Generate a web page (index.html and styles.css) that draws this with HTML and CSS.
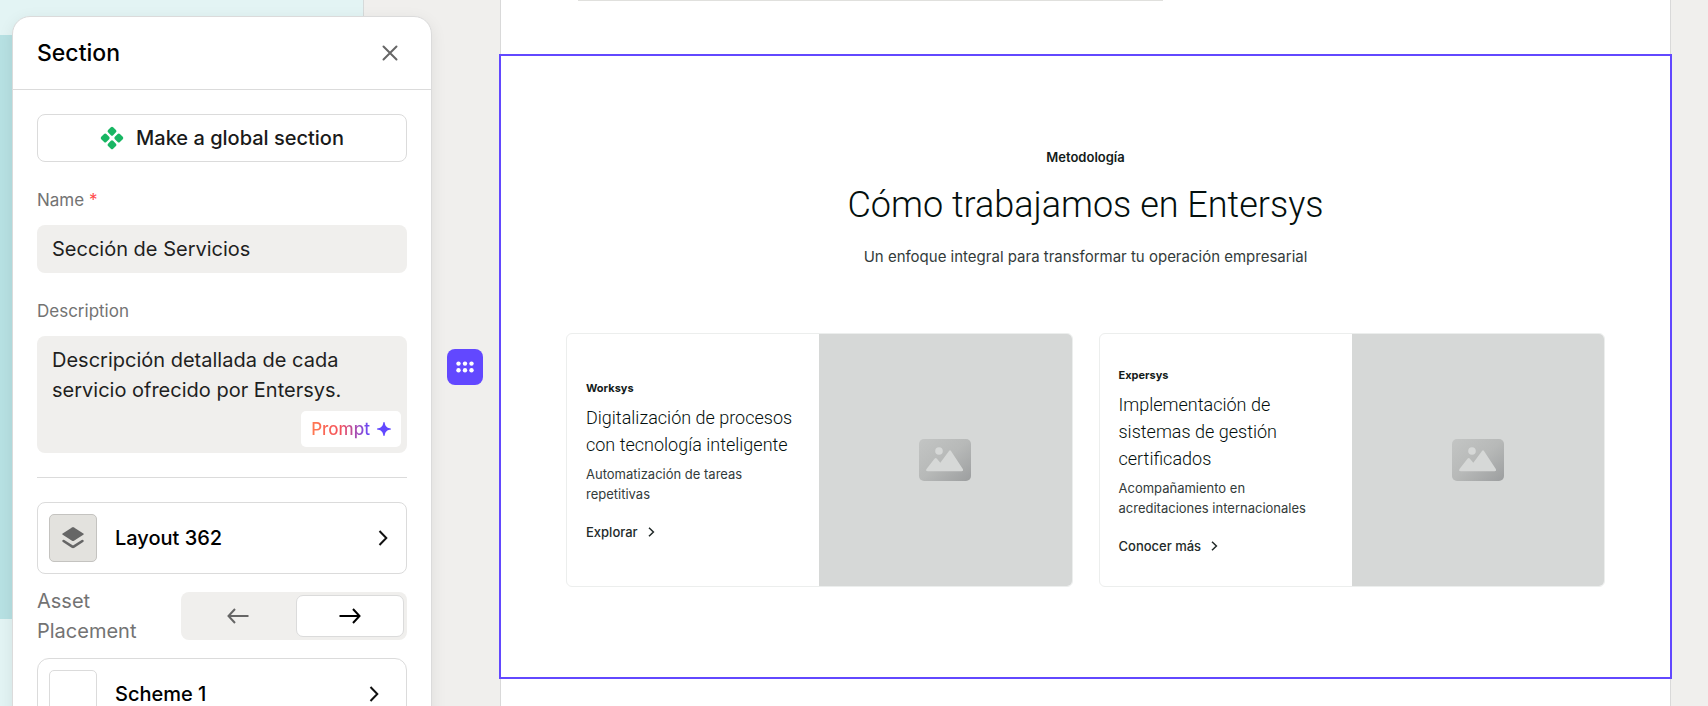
FILE: index.html
```html
<!DOCTYPE html>
<html lang="es">
<head>
<meta charset="utf-8">
<title>Section</title>
<link rel="stylesheet" href="styles.css">
</head>
<body>
<div class="app">
  <div class="preview" aria-hidden="true"><div class="preview-block"></div></div>

  <aside class="panel">
    <header class="panel-header">
      <h1 class="panel-title">Section</h1>
      <button class="close" type="button" aria-label="Close">
        <svg width="16" height="16" viewBox="0 0 16 16" fill="none" stroke="#666" stroke-width="2" stroke-linecap="round"><path d="M1.500 1.500l13 13M14.500 1.500l-13 13"/></svg>
      </button>
    </header>
    <form class="panel-body">
      <button class="global" type="button">
        <svg width="24" height="24" viewBox="0 0 24 24" fill="#18b663"><rect x="-3.6" y="-3.6" width="7.2" height="7.2" rx="1.6" transform="translate(12 5.2) rotate(45)"/><rect x="-3.6" y="-3.6" width="7.2" height="7.2" rx="1.6" transform="translate(18.8 12) rotate(45)"/><rect x="-3.6" y="-3.6" width="7.2" height="7.2" rx="1.6" transform="translate(12 18.8) rotate(45)"/><rect x="-3.6" y="-3.6" width="7.2" height="7.2" rx="1.6" transform="translate(5.2 12) rotate(45)"/></svg>
        <span>Make a global section</span>
      </button>
      <div class="field">
        <label class="label" for="name">Name <span class="required">*</span></label>
        <input class="control" id="name" type="text" value="Sección de Servicios">
      </div>
      <div class="field">
        <label class="label" for="description">Description</label>
        <div class="area">
          <textarea class="control control-area" id="description">Descripción detallada de cada servicio ofrecido por Entersys.</textarea>
          <button class="prompt" type="button">
            <span class="prompt-text">Prompt</span>
            <svg width="14" height="14" viewBox="0 0 14 14" fill="#6248ff"><path d="M7 0c.5 0 .6.400.8 1.200C8.300 4 9.600 5.700 12.800 6.200c.8.200 1.200.300 1.200.8s-.4.600-1.200.8C9.600 8.300 8.300 10 7.800 12.800c-.2.8-.3 1.200-.8 1.200s-.6-.4-.8-1.200C5.700 10 4.400 8.300 1.200 7.800.4 7.600 0 7.500 0 7s.4-.6 1.200-.8C4.400 5.700 5.700 4 6.200 1.200 6.400.4 6.500 0 7 0z"/></svg>
          </button>
        </div>
      </div>
      <hr class="divider">
      <button class="option" type="button">
        <span class="tile tile-layout">
          <svg width="22" height="22" viewBox="0 0 22 22"><path d="M10 .4q1-.6 2 0l9.300 6q1 .7 0 1.400l-9.300 6q-1 .6-2 0l-9.300-6q-1-.7 0-1.400z" fill="#666"/><path d="M1.600 14l8.700 5.700q.7.400 1.400 0l8.700-5.700" fill="none" stroke="#666" stroke-width="2.600" stroke-linecap="round" stroke-linejoin="round"/></svg>
        </span>
        <span class="option-name">Layout 362</span>
        <svg width="10" height="16" viewBox="0 0 10 16" fill="none" stroke="#111" stroke-width="2"><path d="M1.500 1l6.800 7-6.800 7"/></svg>
      </button>
      <div class="placement">
        <span class="placement-label">Asset Placement</span>
        <div class="segments" role="group" aria-label="Asset Placement">
          <button class="segment" type="button" aria-label="Left">
            <svg width="22" height="16" viewBox="0 0 22 16" fill="none" stroke="#666" stroke-width="2"><path d="M21.500 8H1.500M8 1L1.500 8 8 15"/></svg>
          </button>
          <button class="segment segment-active" type="button" aria-label="Right" aria-pressed="true">
            <svg width="22" height="16" viewBox="0 0 22 16" fill="none" stroke="#000" stroke-width="2"><path d="M.5 8h20M14 1l6.500 7-6.500 7"/></svg>
          </button>
        </div>
      </div>
      <button class="option option-scheme" type="button">
        <span class="tile"></span>
        <span class="option-name">Scheme 1</span>
        <svg width="10" height="16" viewBox="0 0 10 16" fill="none" stroke="#111" stroke-width="2"><path d="M1.500 1l6.800 7-6.800 7"/></svg>
      </button>
    </form>
  </aside>

  <div class="gutter">
    <button class="handle" type="button" aria-label="Move section">
      <svg width="18" height="12" viewBox="0 0 18 12" fill="#fff"><circle cx="2.500" cy="2.600" r="2.200"/><circle cx="9" cy="2.600" r="2.200"/><circle cx="15.500" cy="2.600" r="2.200"/><circle cx="2.500" cy="9.200" r="2.200"/><circle cx="9" cy="9.200" r="2.200"/><circle cx="15.500" cy="9.200" r="2.200"/></svg>
    </button>
  </div>

  <main class="canvas">
    <div class="previous"></div>
    <section class="selected">
      <p class="eyebrow">Metodología</p>
      <h2 class="heading">Cómo trabajamos en Entersys</h2>
      <p class="lead">Un enfoque integral para transformar tu operación empresarial</p>
      <div class="cards">
        <article class="card">
          <div class="card-text">
            <p class="card-tag">Worksys</p>
            <h3 class="card-title">Digitalización de procesos con tecnología inteligente</h3>
            <p class="card-copy">Automatización de tareas repetitivas</p>
            <a class="card-link" href="#explorar">Explorar <svg width="7" height="10" viewBox="0 0 7 10" fill="none" stroke="#222a29" stroke-width="1.500"><path d="M1 .8L5.400 5 1 9.200"/></svg></a>
          </div>
          <div class="card-image">
            <svg width="52" height="42" viewBox="0 0 52 42"><defs><linearGradient id="g1" x1="0" y1="0" x2="1" y2="1"><stop offset="0" stop-color="#c3c5c4"/><stop offset=".5" stop-color="#b7b9b8"/><stop offset="1" stop-color="#9c9e9f"/></linearGradient></defs><rect width="52" height="42" rx="5" fill="url(#g1)"/><circle cx="20" cy="12" r="3.800" fill="#d6d8d7"/><path d="M7.500 30L15.700 19.500q1-1.200 2 0l3.600 4.200L30 12q1-1.300 2 0l11.800 18q1 2.200-1.200 2.200H9q-2.800 0-1.500-2.200z" fill="#d6d8d7"/></svg>
          </div>
        </article>
        <article class="card">
          <div class="card-text">
            <p class="card-tag">Expersys</p>
            <h3 class="card-title">Implementación de sistemas de gestión certificados</h3>
            <p class="card-copy">Acompañamiento en acreditaciones internacionales</p>
            <a class="card-link" href="#conocer">Conocer más <svg width="7" height="10" viewBox="0 0 7 10" fill="none" stroke="#222a29" stroke-width="1.500"><path d="M1 .8L5.400 5 1 9.200"/></svg></a>
          </div>
          <div class="card-image">
            <svg width="52" height="42" viewBox="0 0 52 42"><rect width="52" height="42" rx="5" fill="url(#g1)"/><circle cx="20" cy="12" r="3.800" fill="#d6d8d7"/><path d="M7.500 30L15.700 19.500q1-1.200 2 0l3.600 4.200L30 12q1-1.300 2 0l11.800 18q1 2.200-1.200 2.200H9q-2.800 0-1.500-2.200z" fill="#d6d8d7"/></svg>
          </div>
        </article>
      </div>
    </section>
  </main>
</div>
</body>
</html>
```
FILE: styles.css
```css
* { box-sizing: border-box; }
body, h1, h2, h3, p { margin: 0; }
body { background: #f0efed; color: #000; font-family: Inter, sans-serif; }
button, input, textarea { font: inherit; color: inherit; margin: 0; }
button { cursor: pointer; padding: 0; }
svg { flex: none; }

.app { position: relative; display: flex; height: 100vh; overflow: hidden; }

.preview { position: absolute; top: 0; bottom: 0; left: 0; width: 364px; background: #e3f4f4; border-right: 1px solid #d6dada; padding-top: 35px; }
.preview-block { height: 584px; background: #b7e1e3; }

.panel { position: relative; flex: none; width: 420px; margin: 16px 0 0 12px; align-self: flex-start; background: #fff; border: 1px solid #dbdbdb; border-radius: 18px; box-shadow: 0 4px 16px rgba(0, 0, 0, .08); }
.panel-header { display: flex; align-items: center; justify-content: space-between; height: 73px; padding: 0 33px 0 24px; border-bottom: 1px solid #dbdbdb; }
.panel-title { font-size: 23px; line-height: 32px; font-weight: 500; }
.close { display: flex; border: 0; background: none; }
.panel-body { padding: 24px; }

.global { display: flex; align-items: center; justify-content: center; gap: 12px; width: 100%; height: 48px; border: 1px solid #dbdbdb; border-radius: 8px; background: #fff; color: #1a1a1a; font-size: 20px; font-weight: 500; }
.field { margin-top: 24px; }
.label { display: block; margin-bottom: 11px; font-size: 17px; line-height: 28px; color: #737373; }
.required { color: #ff4a4a; }
.control { display: block; width: 100%; height: 48px; padding: 0 15px; border: 0; border-radius: 8px; background: #f0efed; color: #1f1f1f; font-size: 20px; line-height: 30px; }
.area { position: relative; }
.control-area { height: 117px; padding-top: 9px; resize: none; overflow: hidden; }
.prompt { position: absolute; right: 6px; bottom: 6px; display: flex; align-items: center; gap: 7px; height: 36px; padding: 0 10px; border: 0; border-radius: 5px; background: #fff; font-size: 17px; font-weight: 500; }
.prompt-text { background: linear-gradient(90deg, #ff7a50, #f4515c 50%, #6248ff); background-clip: text; -webkit-background-clip: text; color: transparent; }
.divider { height: 1px; margin: 24px 0; border: 0; background: #dbdbdb; }

.option { display: flex; align-items: center; width: 100%; height: 72px; padding: 0 18px 0 11px; border: 1px solid #dbdbdb; border-radius: 8px; background: #fff; text-align: left; }
.option-scheme { margin-top: 12px; padding-right: 27px; border-radius: 12px; }
.option-name { flex: 1; margin-left: 18px; font-size: 20px; font-weight: 500; }
.tile { display: flex; align-items: center; justify-content: center; width: 48px; height: 48px; border: 1px solid #dbdbdb; border-radius: 5px; background: #fff; }
.tile-layout { background: #e3e2de; border-color: #c4c3c0; }
.placement { display: flex; align-items: center; justify-content: space-between; margin-top: 12px; }
.placement-label { width: 120px; font-size: 20px; line-height: 30px; color: #737373; }
.segments { display: grid; grid-template-columns: 1fr 1fr; gap: 4px; width: 226px; height: 48px; padding: 3px; border-radius: 8px; background: #f0efed; }
.segment { display: flex; align-items: center; justify-content: center; border: 1px solid transparent; border-radius: 7px; background: none; }
.segment-active { background: #fff; border-color: #dbdbdb; }

.gutter { position: relative; flex: none; width: 68px; padding: 349px 0 0 15px; }
.handle { display: flex; align-items: center; justify-content: center; width: 36px; height: 36px; border: 0; border-radius: 8px; background: #6248ff; }

.canvas { position: relative; flex: 1; margin-right: 37px; background: #fff; border: solid #d9d9d9; border-width: 0 1px; }
.previous { height: 1px; width: 50%; margin: 0 0 53px 77px; background: #e0e0dd; }
.selected { margin: 0 -2px; padding: 89px 65px 90px; border: 2px solid #6248ff; background: #fff; text-align: center; }
.eyebrow { font-size: 13px; line-height: 24px; font-weight: 600; color: #131b1a; }
.heading { margin-top: 10px; font-family: Roboto, sans-serif; font-size: 36px; line-height: 52px; font-weight: 300; color: #040f0d; }
.lead { margin-top: 14px; font-size: 15px; line-height: 24px; color: #333b3a; }
.cards { display: grid; grid-template-columns: 1fr 1fr; gap: 26px; margin-top: 64px; text-align: left; }
.card { display: grid; grid-template-columns: 1fr 1fr; min-height: 254px; border: 1px solid #eceeed; border-radius: 6px; overflow: hidden; }
.card-text { display: flex; flex-direction: column; align-items: flex-start; justify-content: center; padding: 0 19px; }
.card-tag { font-size: 11px; line-height: 20px; font-weight: 700; color: #131b1a; }
.card-title { margin-top: 6px; font-family: Roboto, sans-serif; font-size: 18px; line-height: 27px; font-weight: 300; color: #040f0d; }
.card-copy { margin-top: 6px; font-size: 13px; line-height: 20px; color: #333b3a; }
.card-link { display: flex; align-items: center; gap: 10px; margin-top: 18px; font-size: 13px; line-height: 20px; font-weight: 500; color: #222a29; text-decoration: none; }
.card-image { display: flex; align-items: center; justify-content: center; background: #d6d8d7; }
```
